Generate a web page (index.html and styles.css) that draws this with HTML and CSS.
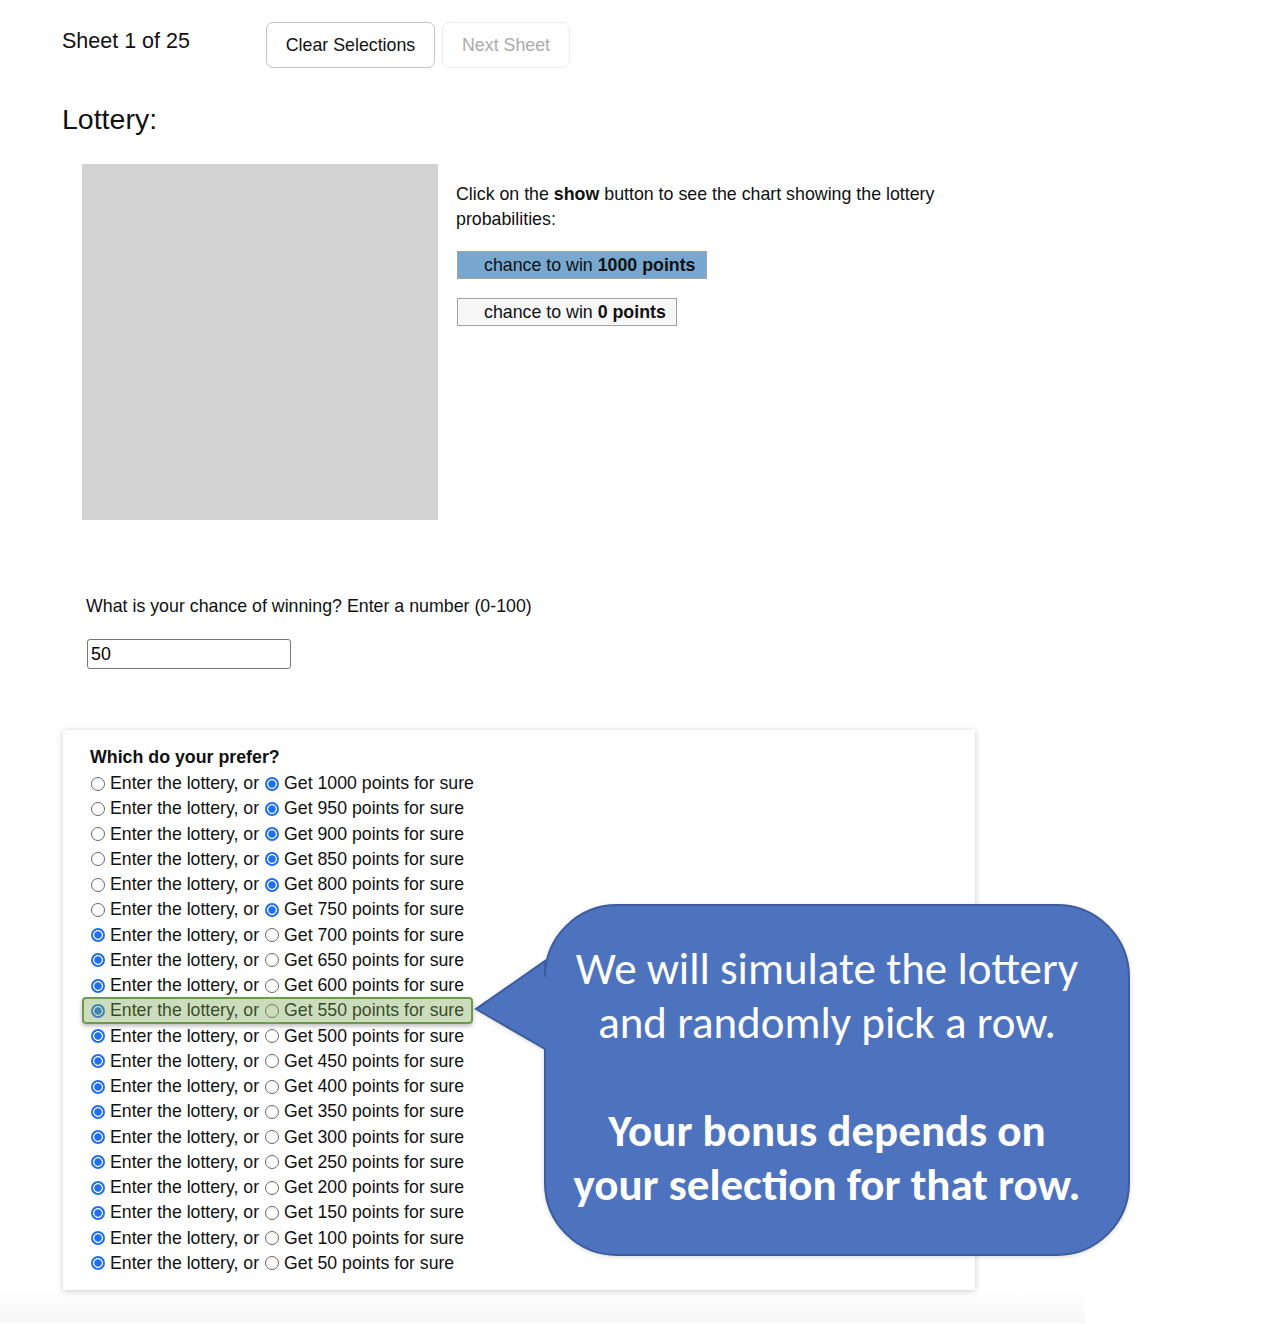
FILE: index.html
```html
<!DOCTYPE html>
<html lang="en">
<head>
<meta charset="utf-8">
<title>Lottery Sheet</title>
<link rel="stylesheet" href="styles.css">
</head>
<body>
<div class="page">
  <div class="topbar">
    <div class="sheet-label">Sheet 1 of 25</div>
    <button class="btn btn-clear" type="button">Clear Selections</button>
    <button class="btn btn-next" type="button" disabled>Next Sheet</button>
  </div>

  <h1 class="title">Lottery:</h1>

  <div class="chart-row">
    <div class="chart-box"></div>
    <div class="chart-info">
      <p class="chart-text">Click on the <b>show</b> button to see the chart showing the lottery probabilities:</p>
      <div class="legend legend-win">chance to win <b>1000 points</b></div>
      <div class="legend legend-lose">chance to win <b>0 points</b></div>
    </div>
  </div>

  <div class="question">
    <label class="question-text" for="chance">What is your chance of winning? Enter a number (0-100)</label>
    <input class="chance-input" id="chance" type="text" value="50">
  </div>

  <div class="card">
    <div class="card-title">Which do your prefer?</div>
    <div class="row"><input class="radio" type="radio" name="r1"><span>Enter the lottery, or</span><input class="radio radio-2" type="radio" name="r1" checked><span>Get 1000 points for sure</span></div>
    <div class="row"><input class="radio" type="radio" name="r2"><span>Enter the lottery, or</span><input class="radio radio-2" type="radio" name="r2" checked><span>Get 950 points for sure</span></div>
    <div class="row"><input class="radio" type="radio" name="r3"><span>Enter the lottery, or</span><input class="radio radio-2" type="radio" name="r3" checked><span>Get 900 points for sure</span></div>
    <div class="row"><input class="radio" type="radio" name="r4"><span>Enter the lottery, or</span><input class="radio radio-2" type="radio" name="r4" checked><span>Get 850 points for sure</span></div>
    <div class="row"><input class="radio" type="radio" name="r5"><span>Enter the lottery, or</span><input class="radio radio-2" type="radio" name="r5" checked><span>Get 800 points for sure</span></div>
    <div class="row"><input class="radio" type="radio" name="r6"><span>Enter the lottery, or</span><input class="radio radio-2" type="radio" name="r6" checked><span>Get 750 points for sure</span></div>
    <div class="row"><input class="radio" type="radio" name="r7" checked><span>Enter the lottery, or</span><input class="radio radio-2" type="radio" name="r7"><span>Get 700 points for sure</span></div>
    <div class="row"><input class="radio" type="radio" name="r8" checked><span>Enter the lottery, or</span><input class="radio radio-2" type="radio" name="r8"><span>Get 650 points for sure</span></div>
    <div class="row"><input class="radio" type="radio" name="r9" checked><span>Enter the lottery, or</span><input class="radio radio-2" type="radio" name="r9"><span>Get 600 points for sure</span></div>
    <div class="row"><input class="radio" type="radio" name="r10" checked><span>Enter the lottery, or</span><input class="radio radio-2" type="radio" name="r10"><span>Get 550 points for sure</span></div>
    <div class="row"><input class="radio" type="radio" name="r11" checked><span>Enter the lottery, or</span><input class="radio radio-2" type="radio" name="r11"><span>Get 500 points for sure</span></div>
    <div class="row"><input class="radio" type="radio" name="r12" checked><span>Enter the lottery, or</span><input class="radio radio-2" type="radio" name="r12"><span>Get 450 points for sure</span></div>
    <div class="row"><input class="radio" type="radio" name="r13" checked><span>Enter the lottery, or</span><input class="radio radio-2" type="radio" name="r13"><span>Get 400 points for sure</span></div>
    <div class="row"><input class="radio" type="radio" name="r14" checked><span>Enter the lottery, or</span><input class="radio radio-2" type="radio" name="r14"><span>Get 350 points for sure</span></div>
    <div class="row"><input class="radio" type="radio" name="r15" checked><span>Enter the lottery, or</span><input class="radio radio-2" type="radio" name="r15"><span>Get 300 points for sure</span></div>
    <div class="row"><input class="radio" type="radio" name="r16" checked><span>Enter the lottery, or</span><input class="radio radio-2" type="radio" name="r16"><span>Get 250 points for sure</span></div>
    <div class="row"><input class="radio" type="radio" name="r17" checked><span>Enter the lottery, or</span><input class="radio radio-2" type="radio" name="r17"><span>Get 200 points for sure</span></div>
    <div class="row"><input class="radio" type="radio" name="r18" checked><span>Enter the lottery, or</span><input class="radio radio-2" type="radio" name="r18"><span>Get 150 points for sure</span></div>
    <div class="row"><input class="radio" type="radio" name="r19" checked><span>Enter the lottery, or</span><input class="radio radio-2" type="radio" name="r19"><span>Get 100 points for sure</span></div>
    <div class="row"><input class="radio" type="radio" name="r20" checked><span>Enter the lottery, or</span><input class="radio radio-2" type="radio" name="r20"><span>Get 50 points for sure</span></div>

    <div class="row-highlight"></div>

    <div class="callout">
      <svg class="callout-shape" width="660" height="356" viewBox="0 0 660 356" aria-hidden="true">
        <path d="M144 3 H584 A72 72 0 0 1 656 75 V281 A72 72 0 0 1 584 353 H144 A72 72 0 0 1 72 281 V147 L3 107 L72 59 V75 A72 72 0 0 1 144 3 Z" fill="#4e73be" stroke="#3b5c9e" stroke-width="2"/>
      </svg>
      <div class="callout-text">
        <p class="callout-line">We will simulate the lottery<br>and randomly pick a row.</p>
        <p class="callout-line callout-bold">Your bonus depends on<br>your selection for that row.</p>
      </div>
    </div>
  </div>
</div>
<div class="footer-fade"></div>
</body>
</html>
```

FILE: styles.css
```css
* {
  box-sizing: border-box;
}

html, body {
  margin: 0;
  padding: 0;
  background: #ffffff;
}

body {
  font-family: "Liberation Sans", Arial, Helvetica, sans-serif;
  font-size: 17.8px;
  color: #111;
}

.page {
  padding: 22px 0 0 62px;
}

.topbar {
  display: flex;
  align-items: flex-start;
  height: 46px;
}

.sheet-label {
  width: 204px;
  font-size: 21.5px;
  line-height: 24px;
  margin-top: 7px;
}

.btn {
  height: 46px;
  background: #fff;
  border-radius: 7px;
  font-family: inherit;
  font-size: 17.8px;
  padding: 0;
  margin: 0;
  text-align: center;
}

.btn-clear {
  width: 169px;
  border: 1.5px solid #c2c2c2;
  color: #111;
}

.btn-next {
  width: 128px;
  margin-left: 7px;
  border: 1.5px solid #ececec;
  color: #ababab;
}

.title {
  font-size: 28.5px;
  font-weight: normal;
  line-height: 33px;
  margin: 35px 0 0 0;
}

.chart-row {
  display: flex;
  align-items: flex-start;
  margin: 28px 0 0 20px;
}

.chart-box {
  width: 356px;
  height: 356px;
  background: #d3d3d3;
  flex: none;
}

.chart-info {
  width: 500px;
  margin-left: 18px;
  padding-top: 18px;
}

.chart-text {
  margin: 0 0 19px 0;
  line-height: 25px;
}

.legend {
  display: table;
  height: 28px;
  line-height: 26px;
  padding: 0 10px 0 26px;
  border: 1px solid #a3a3a3;
  margin-left: 1px;
}

.legend-win {
  background: #78a8cf;
  margin-bottom: 19px;
}

.legend-lose {
  background: #f6f6f6;
}

.question {
  margin: 76px 0 0 24px;
}

.question-text {
  display: block;
  line-height: 21px;
}

.chance-input {
  display: block;
  margin: 22px 0 0 1px;
  width: 204px;
  height: 30px;
  border: 1px solid #777;
  border-radius: 3px;
  padding: 0 0 0 3px;
  font-family: inherit;
  font-size: 17.8px;
  color: #000;
  background: #fff;
  outline: none;
}

.card {
  position: relative;
  width: 912px;
  margin: 61px 0 0 1px;
  padding: 14px 0 14px 27px;
  background: #fff;
  box-shadow: 0 1px 6px rgba(0, 0, 0, 0.22);
}

.card-title {
  font-weight: bold;
  line-height: 27px;
}

.row {
  display: flex;
  align-items: center;
  height: 25.26px;
  white-space: nowrap;
  font-size: 17.7px;
}

.radio {
  -webkit-appearance: none;
  appearance: none;
  width: 14px;
  height: 14px;
  margin: 0 5px 0 1px;
  border-radius: 50%;
  border: 1px solid #666;
  background: #fff;
  flex: none;
}

.radio:checked {
  border: none;
  background: radial-gradient(circle, #1f6ff0 0 3.4px, #ffffff 4px 4.6px, #1f6ff0 5.2px);
}

.radio-2 {
  margin-left: 6px;
}

.row-highlight {
  position: absolute;
  left: 19px;
  top: 267px;
  width: 391px;
  height: 27px;
  border: 2px solid #6f9a4c;
  border-radius: 4px;
  background: rgba(120, 165, 82, 0.38);
  box-shadow: 0 2px 4px rgba(0, 0, 0, 0.28);
}

.callout {
  position: absolute;
  left: 410px;
  top: 172px;
  width: 660px;
  height: 356px;
}

.callout-shape {
  position: absolute;
  left: 0;
  top: 0;
  filter: drop-shadow(0 1px 2px rgba(0, 0, 0, 0.15));
}

.callout-text {
  position: absolute;
  left: 62px;
  top: 40px;
  width: 584px;
  text-align: center;
  color: #fff;
  font-family: "Carlito", "Lato", "Open Sans", sans-serif;
  font-size: 45px;
  line-height: 54px;
  white-space: nowrap;
}

.callout-line {
  margin: 0 0 54px 0;
}

.callout-bold {
  font-weight: bold;
}

.footer-fade {
  width: 1085px;
  height: 33px;
  background: linear-gradient(to bottom, #ffffff, #f7f7f7);
}
```
